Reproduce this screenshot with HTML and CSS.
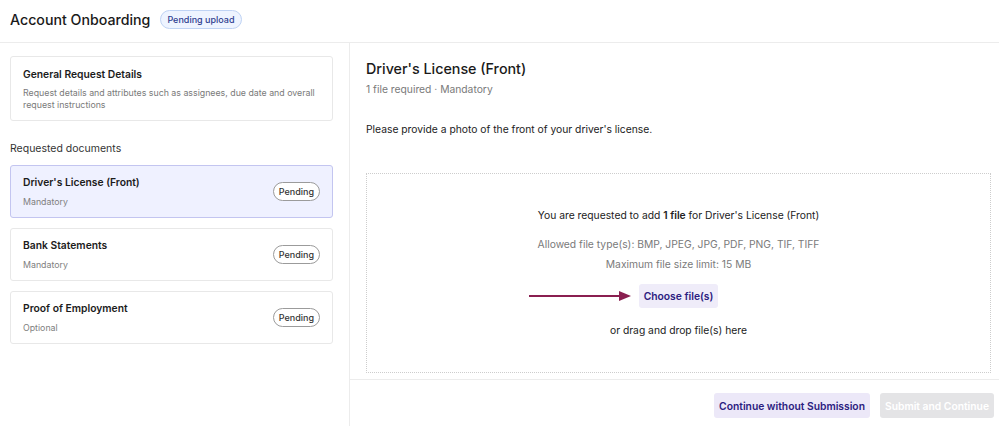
FILE: index.html
```
<!DOCTYPE html>
<html lang="en">
<head>
    <meta charset="UTF-8">
    <meta name="viewport" content="width=device-width, initial-scale=1.0">
    <title>Account Onboarding</title>
    <link rel="stylesheet" href="styles.css">
</head>
<body>
    <header class="top-bar">
        <h1>Account Onboarding</h1>
        <span class="status-badge">Pending upload</span>
    </header>

    <div class="layout">
        <aside class="sidebar">
            <div class="card">
                <div class="card-title">General Request Details</div>
                <div class="card-desc">Request details and attributes such as assignees, due date and overall request instructions</div>
            </div>

            <div class="section-label">Requested documents</div>

            <div class="doc-list">
                <div class="card doc-card active">
                    <div>
                        <div class="card-title">Driver's License (Front)</div>
                        <div class="card-sub">Mandatory</div>
                    </div>
                    <span class="pill">Pending</span>
                </div>
                <div class="card doc-card">
                    <div>
                        <div class="card-title">Bank Statements</div>
                        <div class="card-sub">Mandatory</div>
                    </div>
                    <span class="pill">Pending</span>
                </div>
                <div class="card doc-card">
                    <div>
                        <div class="card-title">Proof of Employment</div>
                        <div class="card-sub">Optional</div>
                    </div>
                    <span class="pill">Pending</span>
                </div>
            </div>
        </aside>

        <main class="detail">
            <div class="detail-body">
                <h2>Driver's License (Front)</h2>
                <div class="meta">1 file required · Mandatory</div>
                <p class="instructions">Please provide a photo of the front of your driver's license.</p>

                <div class="dropzone">
                    <div class="dz-lead">You are requested to add <b>1 file</b> for Driver's License (Front)</div>
                    <div class="dz-info">Allowed file type(s): BMP, JPEG, JPG, PDF, PNG, TIF, TIFF</div>
                    <div class="dz-info">Maximum file size limit: 15 MB</div>
                    <div class="choose-wrap">
                        <svg class="arrow" width="102" height="12" viewBox="0 0 102 12">
                            <line x1="0" y1="6" x2="92" y2="6" stroke="#8a1f50" stroke-width="2"/>
                            <polygon points="90,1 102,6 90,11" fill="#8a1f50"/>
                        </svg>
                        <button class="choose-btn">Choose file(s)</button>
                    </div>
                    <div class="dz-drag">or drag and drop file(s) here</div>
                </div>
            </div>

            <footer class="actions">
                <button class="btn btn-soft">Continue without Submission</button>
                <button class="btn btn-disabled" disabled>Submit and Continue</button>
            </footer>
        </main>
    </div>
</body>
</html>
```

FILE: styles.css
```
* { box-sizing: border-box; }
body {
    margin: 0;
    font-family: Inter, "Noto Sans", sans-serif;
    color: #1a1a1a;
    background: #fff;
    height: 426px;
    overflow: hidden;
}

.top-bar {
    height: 43px;
    display: flex;
    align-items: center;
    gap: 10px;
    padding: 0 10px 4px;
    border-bottom: 1px solid #ececec;
}
.top-bar h1 {
    margin: 0;
    font-size: 14.2px;
    font-weight: 500;
}
.status-badge {
    font-size: 9px;
    font-weight: 500;
    color: #2f3d8f;
    background: #eef4ff;
    border: 1px solid #bfd3f4;
    border-radius: 10px;
    padding: 3px 6px;
}

.layout {
    display: flex;
    height: 383px;
}

.sidebar {
    width: 350px;
    flex-shrink: 0;
    border-right: 1px solid #ececec;
    padding: 13px 16px 0 10px;
}
.card {
    border: 1px solid #e8e8e8;
    border-radius: 3px;
    padding: 11px 12px 10px;
    background: #fff;
}
.card-title {
    font-size: 10.3px;
    font-weight: 600;
    color: #1c1c1c;
}
.card-desc {
    margin-top: 7px;
    font-size: 8.8px;
    line-height: 11.5px;
    color: #7a7a7a;
}
.card-sub {
    margin-top: 8px;
    font-size: 8.8px;
    color: #808080;
}
.section-label {
    margin: 21px 0 10px;
    font-size: 10.5px;
    color: #333;
}
.doc-list {
    display: flex;
    flex-direction: column;
    gap: 10px;
}
.doc-card {
    height: 53px;
    display: flex;
    align-items: center;
    justify-content: space-between;
    padding: 0 12px;
}
.doc-card.active {
    background: #eff1ff;
    border-color: #c3c5f0;
}
.pill {
    font-size: 9px;
    font-weight: 500;
    color: #333;
    background: #fff;
    border: 1px solid #9b9b9b;
    border-radius: 10px;
    padding: 3px 5px;
}

.detail {
    flex: 1;
    display: flex;
    flex-direction: column;
}
.detail-body {
    padding: 17px 8px 0 16px;
    height: 337px;
    border-bottom: 1px solid #ececec;
}
.detail h2 {
    margin: 0;
    font-size: 14.3px;
    font-weight: 500;
}
.meta {
    margin-top: 6px;
    font-size: 10.3px;
    color: #7a7a7a;
}
.instructions {
    margin: 28px 0 0;
    font-size: 10.3px;
    color: #222;
}
.dropzone {
    margin-top: 38px;
    height: 200px;
    border: 1px dotted #cdcdcd;
    display: flex;
    flex-direction: column;
    align-items: center;
    padding-top: 35px;
    text-align: center;
}
.dz-lead {
    font-size: 10.3px;
    color: #222;
    margin-bottom: 13px;
}
.dz-lead b { font-weight: 600; }
.dz-info {
    font-size: 10.3px;
    color: #7a7a7a;
    line-height: 20px;
}
.choose-wrap {
    position: relative;
    margin-top: 10px;
}
.arrow {
    position: absolute;
    left: -110px;
    top: 6px;
}
.choose-btn {
    font-family: inherit;
    font-size: 10.3px;
    font-weight: 600;
    color: #2b2080;
    background: #efecf9;
    border: none;
    border-radius: 3px;
    padding: 0 5px;
    height: 24px;
    white-space: nowrap;
}
.dz-drag {
    margin-top: 16px;
    font-size: 10.3px;
    color: #222;
}

.actions {
    display: flex;
    justify-content: flex-end;
    gap: 10px;
    padding: 13px 5px 0 0;
}
.btn {
    font-family: inherit;
    font-size: 10.3px;
    font-weight: 600;
    height: 25px;
    border: none;
    border-radius: 3px;
    padding: 0 5px;
    white-space: nowrap;
}
.btn-soft {
    background: #ece8f8;
    color: #2b2080;
}
.btn-disabled {
    background: #e4e4e6;
    color: #fff;
}
```
